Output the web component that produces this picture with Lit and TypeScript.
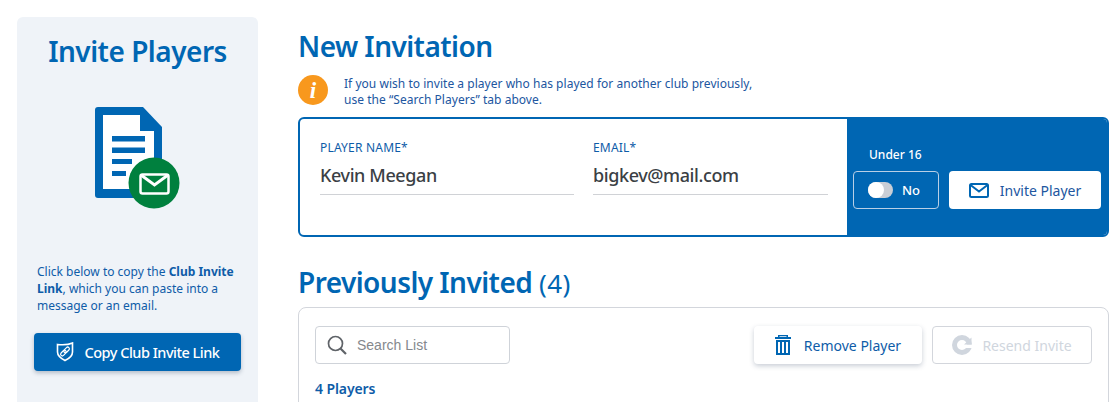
import { LitElement, html, css } from "lit";
import { customElement } from "lit/decorators.js";

@customElement("app-root")
export class AppRoot extends LitElement {
  static styles = css`
    :host {
      display: block;
      width: 1120px;
      height: 402px;
      overflow: hidden;
      background: #fff;
      font-family: "Noto Sans", "Open Sans", sans-serif;
      color: #0066b3;
    }
    * { box-sizing: border-box; }
    .page {
      display: flex;
      gap: 40px;
      padding: 17px 11px 0 17px;
      height: 402px;
    }
    .side {
      width: 241px;
      flex: none;
      height: 420px;
      background: #eff3f8;
      border-radius: 6px;
      display: flex;
      flex-direction: column;
      align-items: center;
      padding-top: 16px;
    }
    .side h2 {
      margin: 0;
      font-size: 28px;
      line-height: 36px;
      font-weight: 600;
      letter-spacing: -0.5px;
      color: #0066b3;
    }
    .doc { margin-top: 38px; display: block; }
    .side p {
      margin: 53px 0 0;
      width: 100%;
      padding: 0 20px;
      font-size: 12px;
      line-height: 17px;
      letter-spacing: 0;
      color: #0e5ca8;
    }
    .side p b { font-weight: 700; }
    .copy {
      margin-top: 19px;
      width: 207px;
      height: 38px;
      border-radius: 4px;
      background: #0066b3;
      color: #fff;
      display: flex;
      align-items: center;
      justify-content: center;
      gap: 11px;
      font-size: 14.5px;
      font-weight: 500;
      letter-spacing: -0.5px;
      box-shadow: 0 2px 4px rgba(40, 60, 90, 0.3);
    }
    .main { flex: 1; min-width: 0; padding-top: 14px; }
    h1 {
      margin: 0;
      font-size: 28px;
      line-height: 30px;
      font-weight: 600;
      letter-spacing: -0.55px;
      color: #0066b3;
    }
    .info {
      display: flex;
      gap: 16px;
      align-items: flex-start;
      margin-top: 14px;
      height: 30px;
    }
    .info-icon {
      width: 30px;
      height: 30px;
      flex: none;
      border-radius: 50%;
      background: #f8981d;
      color: #fff;
      display: flex;
      align-items: center;
      justify-content: center;
      font: italic 700 23px/1 "Liberation Serif", serif;
    }
    .info p {
      margin: 1px 0 0;
      font-size: 12px;
      line-height: 16px;
      letter-spacing: 0.03px;
      color: #21569f;
    }
    .form {
      margin-top: 12px;
      height: 120px;
      border: 2px solid #0066b3;
      border-radius: 6px;
      display: flex;
      overflow: hidden;
    }
    .fields {
      flex: 1;
      display: flex;
      gap: 19px;
      padding: 21px 19px 0 20px;
    }
    .field { height: 55px; border-bottom: 1px solid #d0d2d6; }
    .field.name { width: 254px; }
    .field.email { width: 235px; }
    .field label {
      display: block;
      font-size: 12px;
      line-height: 16px;
      color: #0e5ca8;
      letter-spacing: 0.2px;
    }
    .field div {
      margin-top: 6px;
      font-size: 18px;
      line-height: 26px;
      font-weight: 500;
      letter-spacing: -0.4px;
      color: #3b3f45;
    }
    .u16 {
      width: 260px;
      flex: none;
      background: #0066b3;
      padding: 27px 6px 0 6px;
      color: #fff;
    }
    .u16 .lbl {
      margin-left: 16px;
      font-size: 12px;
      line-height: 18px;
      font-weight: 500;
    }
    .u16 .row { display: flex; gap: 10px; margin-top: 7px; }
    .toggle {
      width: 86px;
      flex: none;
      height: 38px;
      border: 1px solid #b9cfe6;
      border-radius: 4px;
      display: flex;
      align-items: center;
      gap: 9px;
      padding-left: 14px;
      font-size: 13px;
      font-weight: 500;
    }
    .track {
      width: 25px;
      height: 16px;
      border-radius: 8px;
      background: #c9ced6;
      display: flex;
    }
    .knob { width: 16px; height: 16px; border-radius: 50%; background: #fff; }
    .invite {
      width: 152px;
      flex: none;
      height: 38px;
      border-radius: 4px;
      background: #fff;
      color: #21569f;
      display: flex;
      align-items: center;
      justify-content: center;
      gap: 11px;
      font-size: 14px;
      letter-spacing: 0;
    }
    h1.prev { margin-top: 29px; line-height: 32px; }
    h1.prev span { font-weight: 400; font-size: 26px; line-height: 1; letter-spacing: 0.4px; }
    .list {
      margin-top: 9px;
      height: 140px;
      border: 1px solid #d3d6dc;
      border-radius: 8px;
      padding: 18px 16px 0 16px;
    }
    .tools { display: flex; align-items: center; }
    .search {
      width: 195px;
      height: 38px;
      border: 1px solid #cfd3d9;
      border-radius: 4px;
      display: flex;
      align-items: center;
      gap: 10px;
      padding-left: 11px;
      font: 14px "Liberation Sans", Arial, sans-serif;
      color: #85888d;
    }
    .btn {
      height: 38px;
      border-radius: 4px;
      display: flex;
      align-items: center;
      justify-content: center;
      font-size: 14px;
      letter-spacing: 0;
    }
    .remove {
      margin-left: auto;
      width: 168px;
      gap: 13px;
      background: #fff;
      color: #0e5ca8;
      box-shadow: 0 2px 5px rgba(40, 60, 90, 0.25);
    }
    .resend {
      margin-left: 10px;
      width: 160px;
      gap: 10px;
      border: 1px solid #d3d6dc;
      color: #d0d6de;
    }
    .count {
      margin-top: 15px;
      font-size: 14px;
      line-height: 20px;
      font-weight: 600;
      letter-spacing: -0.1px;
      color: #0e5ca8;
    }
  `;

  render() {
    return html`
      <div class="page">
        <aside class="side">
          <h2>Invite Players</h2>
          <svg class="doc" width="86" height="103" viewBox="0 0 86 103">
            <path fill="#0066b3" d="M3 0H48L67 20V88a3 3 0 0 1-3 3H3a3 3 0 0 1-3-3V3a3 3 0 0 1 3-3Z" />
            <path fill="#fff" d="M8 8H45V24H59V82H8Z" />
            <path fill="#0066b3" d="M17 29H50V34.500H17ZM17 40.500H50V46H17ZM17 52H37V57H17ZM17 64H31V69H17Z" />
            <circle cx="59" cy="76" r="25.500" fill="#00803e" />
            <rect x="45.500" y="67.500" width="28" height="19" rx="2" fill="none" stroke="#fff" stroke-width="2.500" />
            <path d="M46 68L59.500 78L73 68" fill="none" stroke="#fff" stroke-width="3" />
          </svg>
          <p>Click below to copy the <b>Club Invite Link</b>, which you can paste into a message or an email.</p>
          <div class="copy">
            <svg width="18" height="20" viewBox="0 0 18 20" fill="none" stroke="#fff">
              <path stroke-width="1.600" d="M1.500 2.500C6 3 12 3 16.500 1V10c0 4-3 6.500-7.500 8.500C5 16.500 1.500 14 1.500 10Z" />
              <g stroke-width="1.200" transform="rotate(-45 9 9.500)">
                <rect x="3.500" y="7.800" width="6.500" height="3.400" rx="1.700" />
                <rect x="8" y="7.800" width="6.500" height="3.400" rx="1.700" />
              </g>
            </svg>
            <span>Copy Club Invite Link</span>
          </div>
        </aside>
        <main class="main">
          <h1>New Invitation</h1>
          <div class="info">
            <div class="info-icon">i</div>
            <p>If you wish to invite a player who has played for another club previously,<br />use the “Search Players” tab above.</p>
          </div>
          <section class="form">
            <div class="fields">
              <div class="field name"><label>PLAYER NAME*</label><div>Kevin Meegan</div></div>
              <div class="field email"><label>EMAIL*</label><div>bigkev@mail.com</div></div>
            </div>
            <div class="u16">
              <div class="lbl">Under 16</div>
              <div class="row">
                <div class="toggle"><span class="track"><span class="knob"></span></span>No</div>
                <div class="invite">
                  <svg width="20" height="15" viewBox="0 0 20 15" fill="none" stroke="#0066b3" stroke-width="2">
                    <rect x="1" y="1" width="18" height="13" rx="1.500" />
                    <path d="M1.500 2L10 8.500L18.500 2" />
                  </svg>
                  <span>Invite Player</span>
                </div>
              </div>
            </div>
          </section>
          <h1 class="prev">Previously Invited <span>(4)</span></h1>
          <section class="list">
            <div class="tools">
              <div class="search">
                <svg width="20" height="20" viewBox="0 0 20 20" fill="none" stroke="#5f6368" stroke-width="1.700">
                  <circle cx="8.500" cy="8.500" r="7" />
                  <path stroke-width="2.200" d="M13.500 13.500L19 19" />
                </svg>
                <span>Search List</span>
              </div>
              <div class="btn remove">
                <svg width="16" height="20" viewBox="0 0 16 20" fill="#0066b3">
                  <path d="M3 0H13V2H16V4H0V2H3ZM4.500 1.200V2H11.500V1.200ZM1 5H15V20H1ZM3 7V18H5V7ZM7 7V18H9V7ZM11 7V18H13V7Z" fill-rule="evenodd" />
                </svg>
                <span>Remove Player</span>
              </div>
              <div class="btn resend">
                <svg width="20" height="20" viewBox="0 0 20 20">
                  <circle cx="10" cy="10" r="7.500" fill="none" stroke="#d0d6de" stroke-width="5" />
                  <path d="M11 9.500H21V13H11Z" fill="#fff" />
                  <path d="M12 9.500L19.500 2.500V9.500Z" fill="#d0d6de" />
                </svg>
                <span>Resend Invite</span>
              </div>
            </div>
            <div class="count">4 Players</div>
          </section>
        </main>
      </div>
    `;
  }
}
